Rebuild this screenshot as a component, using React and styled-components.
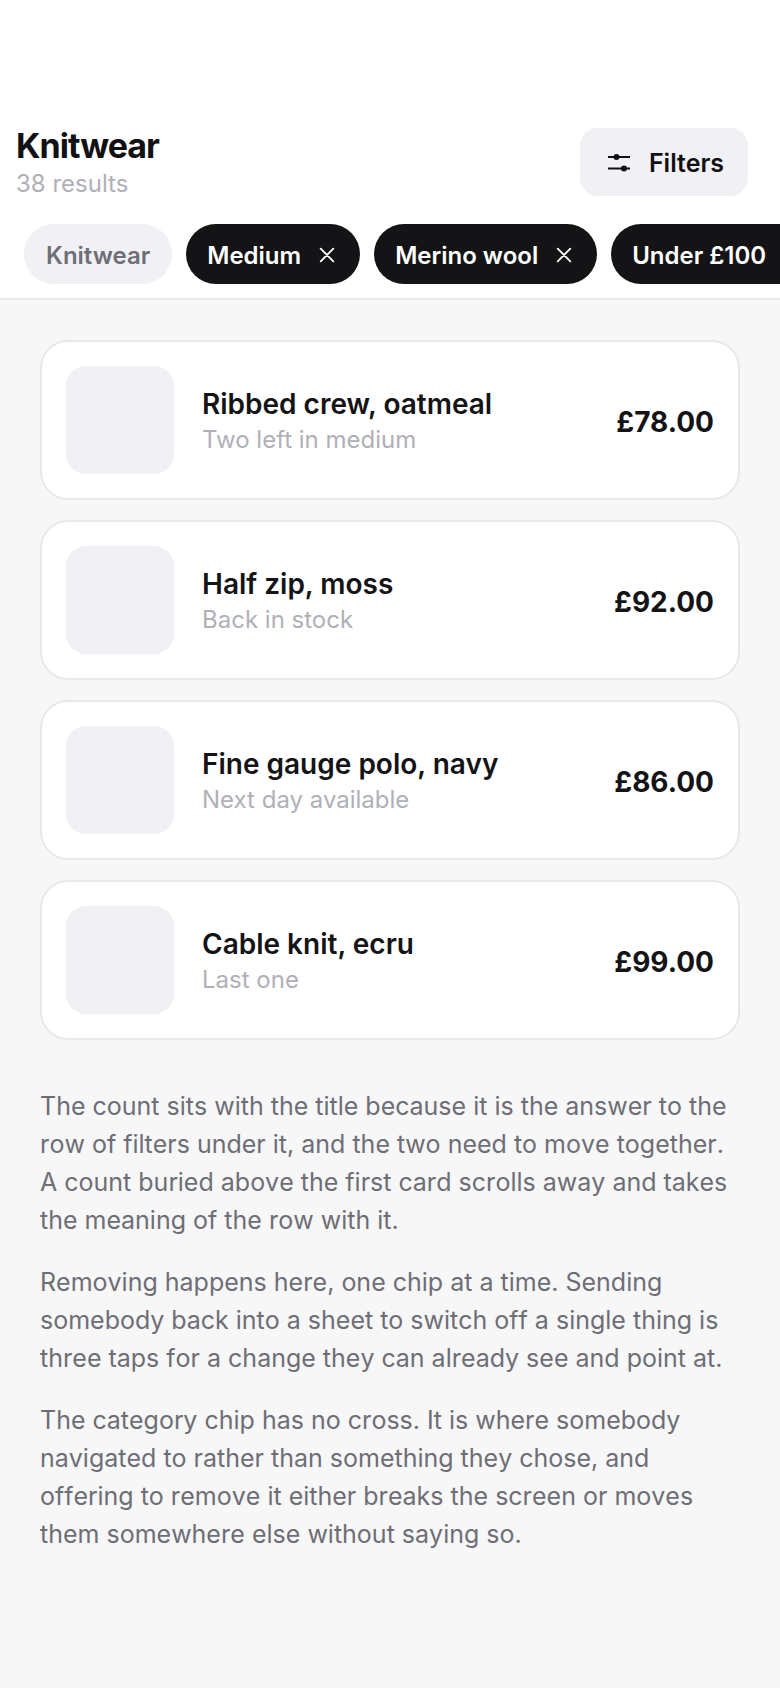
import React from "react";
import styled, { createGlobalStyle } from "styled-components";

const Global = createGlobalStyle`
  html, body { margin: 0; padding: 0; background: #f7f7f8; }
  body { font-family: Inter, "Liberation Sans", sans-serif; width: 780px; height: 1688px; overflow: hidden; }
  * { box-sizing: border-box; }
`;

const Page = styled.div`
  width: 780px;
  height: 1688px;
  background: #f7f7f8;
  overflow: hidden;
`;
const Top = styled.header`
  background: #fff;
  padding-top: 128px;
  border-bottom: 2px solid #e8e8ea;
  height: 300px;
`;
const TitleRow = styled.div`
  display: flex;
  justify-content: space-between;
  align-items: flex-start;
  padding: 0 32px 0 16px;
`;
const Heading = styled.div`
  display: flex;
  flex-direction: column;
`;
const Title = styled.h1`
  margin: 0;
  font-size: 34px;
  line-height: 36px;
  font-weight: 700;
  letter-spacing: -0.95px;
  color: #111114;
`;
const Count = styled.div`
  margin-top: 2px;
  font-size: 24px;
  line-height: 36px;
  color: #b0b0b8;
`;
const FilterButton = styled.button`
  display: flex;
  align-items: center;
  justify-content: center;
  gap: 18px;
  width: 168px;
  height: 68px;
  padding: 0 0 0 3px;
  border: 0;
  border-radius: 18px;
  background: #f1f1f5;
  color: #111114;
  font: 600 25px Inter, sans-serif;
`;
const FilterLabel = styled.span`
  padding-top: 2px;
`;
const ChipRow = styled.div`
  display: flex;
  gap: 14px;
  padding: 22px 0 0 24px;
  white-space: nowrap;
`;
const Chip = styled.div`
  flex: none;
  display: flex;
  align-items: center;
  gap: 18px;
  height: 60px;
  padding: 2px ${(p) => (p.$on ? "25px" : "22px")} 0 ${(p) => (p.$on ? "21px" : "22px")};
  border-radius: 30px;
  font-size: 24px;
  font-weight: 600;
  background: ${(p) => (p.$on ? "#141417" : "#f1f1f5")};
  color: ${(p) => (p.$on ? "#fff" : "#6e6e76")};
`;
const Cards = styled.div`
  display: flex;
  flex-direction: column;
  gap: 20px;
  padding: 40px 40px 0;
`;
const Card = styled.article`
  display: flex;
  align-items: center;
  height: 160px;
  padding: 0 24px;
  background: #fff;
  border: 2px solid #e8e8ea;
  border-radius: 28px;
`;
const Thumb = styled.div`
  flex: none;
  width: 108px;
  height: 108px;
  border-radius: 20px;
  background: #f1f1f5;
`;
const Info = styled.div`
  flex: 1;
  margin-left: 28px;
  padding-top: 3px;
`;
const Name = styled.div`
  font-size: 28px;
  line-height: 36px;
  font-weight: 600;
  color: #141417;
`;
const Note = styled.div`
  margin-top: 1px;
  font-size: 24px;
  line-height: 34px;
  color: #b0b0b8;
`;
const Price = styled.div`
  padding-top: 4px;
  font-size: 28px;
  font-weight: 700;
  color: #141417;
`;
const Copy = styled.div`
  padding: 47px 40px 0;
`;
const Para = styled.p`
  margin: 0 0 24px;
  font-size: 25px;
  line-height: 38px;
  color: #6e6e76;
  font-kerning: none;
`;

const Sliders = () => (
  <svg width="24" height="24" viewBox="0 0 24 24" fill="none" stroke="#111114" strokeWidth="2">
    <path d="M1 7h22M1 18.5h22" />
    <circle cx="9.5" cy="7" r="3" fill="#111114" stroke="none" />
    <circle cx="17" cy="18.5" r="3" fill="#111114" stroke="none" />
  </svg>
);
const Cross = () => (
  <svg width="16" height="16" viewBox="0 0 16 16" fill="none" stroke="#fff" strokeWidth="1.8" strokeLinecap="round">
    <path d="M1.7 1.7l12.6 12.6M14.3 1.7L1.7 14.3" />
  </svg>
);

const items = [
  ["Ribbed crew, oatmeal", "Two left in medium", "£78.00"],
  ["Half zip, moss", "Back in stock", "£92.00"],
  ["Fine gauge polo, navy", "Next day available", "£86.00"],
  ["Cable knit, ecru", "Last one", "£99.00"],
];

export default function App() {
  return (
    <Page>
      <Global />
      <Top>
        <TitleRow>
          <Heading>
            <Title>Knitwear</Title>
            <Count>38 results</Count>
          </Heading>
          <FilterButton><Sliders /><FilterLabel>Filters</FilterLabel></FilterButton>
        </TitleRow>
        <ChipRow>
          <Chip>Knitwear</Chip>
          <Chip $on>Medium<Cross /></Chip>
          <Chip $on>Merino wool<Cross /></Chip>
          <Chip $on>Under £100<Cross /></Chip>
        </ChipRow>
      </Top>
      <Cards>
        {items.map(([n, s, p]) => (
          <Card key={n}>
            <Thumb />
            <Info>
              <Name>{n}</Name>
              <Note>{s}</Note>
            </Info>
            <Price>{p}</Price>
          </Card>
        ))}
      </Cards>
      <Copy>
        <Para>The count sits with the title because it is the answer to the row of filters under it, and the two need to move together. A count buried above the first card scrolls away and takes the meaning of the row with it.</Para>
        <Para>Removing happens here, one chip at a time. Sending somebody back into a sheet to switch off a single thing is three taps for a change they can already see and point at.</Para>
        <Para>The category chip has no cross. It is where somebody navigated to rather than something they chose, and offering to remove it either breaks the screen or moves them somewhere else without saying so.</Para>
      </Copy>
    </Page>
  );
}
